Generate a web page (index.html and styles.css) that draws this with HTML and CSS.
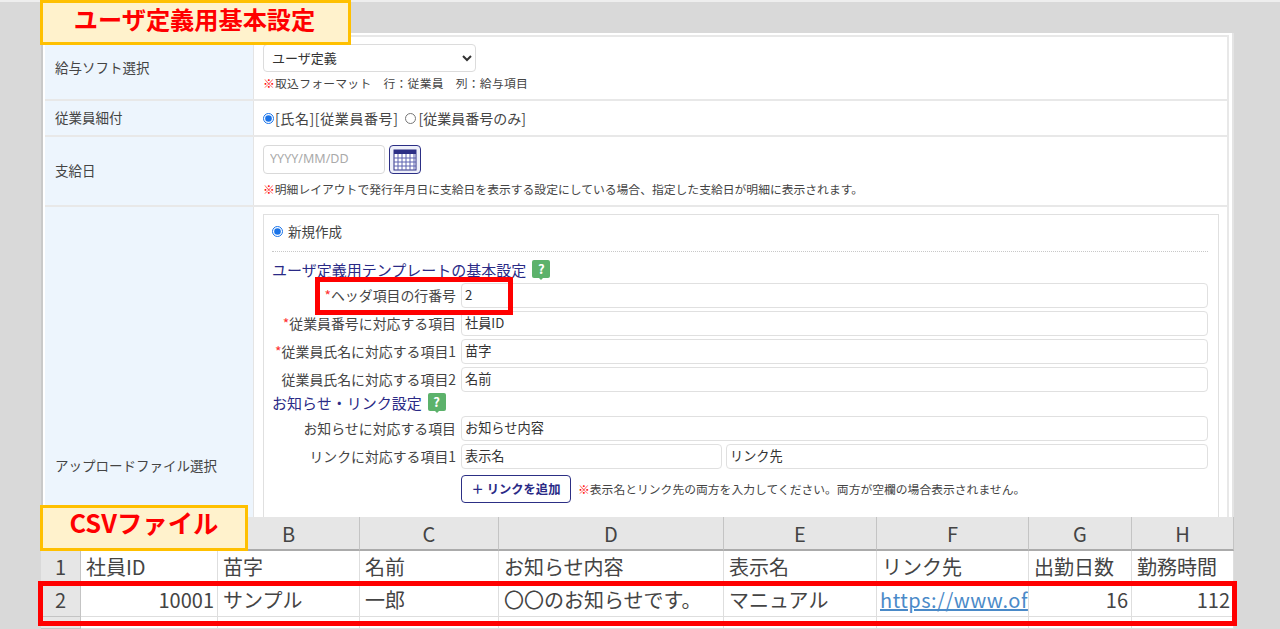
FILE: index.html
```html
<!DOCTYPE html>
<html lang="ja">
<head>
    <meta charset="UTF-8">
    <title>ユーザ定義用基本設定</title>
    <link rel="stylesheet" href="styles.css">
</head>
<body>

    <div class="callout callout-top">ユーザ定義用基本設定</div>
    <div class="callout callout-csv">CSVファイル</div>
    <div class="mark mark-header"></div>
    <div class="mark mark-row"></div>

    <div class="screen">

        <!-- ===== Form ===== -->
        <div class="panel">
            <div class="row row-soft">
                <div class="label">給与ソフト選択</div>
                <div class="cell">
                    <select class="select"><option>ユーザ定義</option></select>
                    <p class="note note-wide"><span class="kome">※</span>取込フォーマット　行：従業員　列：給与項目</p>
                </div>
            </div>

            <div class="row row-slip">
                <div class="label">従業員細付</div>
                <div class="cell cell-radio">
                    <input type="radio" name="slip" checked>
                    <span class="slip-name">[氏名][従業員番号]</span>
                    <input type="radio" name="slip">
                    <span>[従業員番号のみ]</span>
                </div>
            </div>

            <div class="row row-date">
                <div class="label">支給日</div>
                <div class="cell">
                    <div class="date-line">
                        <input type="text" class="date" placeholder="YYYY/MM/DD">
                        <div class="cal">
                            <svg width="24" height="22" viewBox="0 0 24 22">
                                <rect x="1" y="1" width="22" height="20" fill="#fff" stroke="#2c2f85"/>
                                <rect x="1" y="1" width="22" height="4" fill="#2c2f85"/>
                                <path d="M1 9h22M1 13h22M1 17h22M5 5v16M9 5v16M13 5v16M17 5v16M21 5v16" stroke="#5d62b0" fill="none"/>
                            </svg>
                        </div>
                    </div>
                    <p class="note"><span class="kome">※</span>明細レイアウトで発行年月日に支給日を表示する設定にしている場合、指定した支給日が明細に表示されます。</p>
                </div>
            </div>

            <div class="row row-upload">
                <div class="label label-upload">アップロードファイル選択</div>
                <div class="cell cell-upload">
                    <div class="box">
                        <div class="new-line">
                            <input type="radio" name="mode" checked>
                            <span>新規作成</span>
                        </div>

                        <div class="title title-first">ユーザ定義用テンプレートの基本設定 <span class="help">?</span></div>
                        <div class="field"><label><span class="req">*</span>ヘッダ項目の行番号</label><div class="input">2</div></div>
                        <div class="field"><label><span class="req">*</span>従業員番号に対応する項目</label><div class="input">社員ID</div></div>
                        <div class="field"><label><span class="req">*</span>従業員氏名に対応する項目1</label><div class="input">苗字</div></div>
                        <div class="field"><label>従業員氏名に対応する項目2</label><div class="input">名前</div></div>

                        <div class="title">お知らせ・リンク設定 <span class="help">?</span></div>
                        <div class="field"><label>お知らせに対応する項目</label><div class="input">お知らせ内容</div></div>
                        <div class="field">
                            <label>リンクに対応する項目1</label>
                            <div class="input input-name">表示名</div>
                            <div class="input">リンク先</div>
                        </div>
                        <div class="add-line">
                            <div class="add">＋ リンクを追加</div>
                            <p class="note"><span class="kome">※</span>表示名とリンク先の両方を入力してください。両方が空欄の場合表示されません。</p>
                        </div>
                    </div>
                </div>
            </div>
        </div>

        <!-- ===== CSV ===== -->
        <div class="sheet">
            <div class="head"></div>
            <div class="head"></div>
            <div class="head">B</div>
            <div class="head">C</div>
            <div class="head">D</div>
            <div class="head">E</div>
            <div class="head">F</div>
            <div class="head">G</div>
            <div class="head">H</div>

            <div class="num">1</div>
            <div class="td">社員ID</div>
            <div class="td">苗字</div>
            <div class="td">名前</div>
            <div class="td">お知らせ内容</div>
            <div class="td">表示名</div>
            <div class="td">リンク先</div>
            <div class="td">出勤日数</div>
            <div class="td">勤務時間</div>

            <div class="num">2</div>
            <div class="td right">10001</div>
            <div class="td">サンプル</div>
            <div class="td">一郎</div>
            <div class="td">〇〇のお知らせです。</div>
            <div class="td">マニュアル</div>
            <div class="td link"><span>https://www.of</span></div>
            <div class="td right">16</div>
            <div class="td right">112</div>

            <div class="num"></div>
            <div class="td"></div>
            <div class="td"></div>
            <div class="td"></div>
            <div class="td"></div>
            <div class="td"></div>
            <div class="td"></div>
            <div class="td"></div>
            <div class="td"></div>
        </div>

    </div>

</body>
</html>
```

FILE: styles.css
```css
* {box-sizing: border-box}

html, body {height: 629px}

body {
    margin: 0;
    overflow: hidden;
    background-color: #d9d9d9;
    border-top: 2px solid #eeeeee;
    font: 13.5px "Noto Sans CJK JP", "Noto Sans", sans-serif;
    color: #444;
}

p {margin: 0}

.screen {padding: 31px 46px 0 41px}

/* ----- Overlays ----- */

.callout {
    position: absolute;
    display: flex;
    justify-content: center;
    align-items: center;
    background-color: #fff2cc;
    border: 3px solid #ffc000;
    color: #ff0000;
    font-weight: 700;
    line-height: 1;
    z-index: 3;
}

.callout-top {
    left: 40px;
    top: 0;
    width: 311px;
    height: 45px;
    padding: 0 2px 7px 0;
    font-size: 24.2px;
}

.callout-csv {
    left: 40px;
    top: 505px;
    width: 208px;
    height: 46px;
    padding-bottom: 10px;
    font-size: 25.4px;
}

.mark {
    position: absolute;
    border: 5px solid #ff0000;
    z-index: 2;
}

.mark-header {
    left: 315px;
    top: 277px;
    width: 198px;
    height: 38px;
}

.mark-row {
    left: 38px;
    top: 581px;
    width: 1199px;
    height: 45px;
}

/* ----- Form ----- */

.panel {
    height: 484px;
    overflow: hidden;
    background-color: #fff;
    padding: 2px 3px 0 2px;
    border-left: 2px solid #c9c9c9;
    border-right: 2px solid #e4e4e4;
}

.row {
    display: flex;
    border-top: 2px solid #e8e8e8;
    border-right: 2px solid #e8e8e8;
}

.row-soft {height: 64px}
.row-slip {height: 36px}
.row-date {height: 70px}
.row-upload {height: 320px}

.label {
    flex: none;
    width: 209px;
    display: flex;
    align-items: center;
    padding: 0 0 2px 10px;
    background-color: #edf5fd;
    border-right: 1px solid #e4e4e4;
}

.label-upload {align-items: flex-start; padding-top: 248px}

.cell {
    flex: 1;
    padding: 7px 8px 0 9px;
}

.select {
    display: block;
    width: 213px;
    height: 28px;
    padding: 0 0 2px 4px;
    background-color: #fff;
    border: 1px solid #dcdcdc;
    border-radius: 4px;
    font: inherit;
    font-size: 13px;
    color: #333;
}

.note {
    margin-top: 3px;
    font-size: 11.8px;
    line-height: 16px;
    color: #444;
    white-space: nowrap;
}

.note-wide {letter-spacing: .25px}

.kome {color: #ff0000}

.cell-radio {
    display: flex;
    align-items: center;
    gap: 3px;
    padding-top: 0;
    font-size: 14px;
}

.cell-radio input:first-child {margin-right: -2px}

.slip-name {
    letter-spacing: .6px;
    margin-right: 3px;
}

.slip-name + input {margin-right: 3px}

input[type="radio"] {
    width: 11px;
    height: 11px;
    margin: 0;
    accent-color: #1a73e8;
}

.date-line {
    display: flex;
    gap: 4px;
}

.date {
    width: 122px;
    height: 29px;
    padding: 0 6px 2px;
    border: 1px solid #d9d9d9;
    border-radius: 4px;
    font: 12.5px "Noto Sans", sans-serif;
}

.date::placeholder {color: #aaa}

.cal {
    width: 32px;
    height: 29px;
    display: flex;
    justify-content: center;
    align-items: center;
    background-color: #eef0fa;
    border: 1px solid #2c2f85;
    border-radius: 4px;
}

.row-date .cell {padding-top: 8px}
.row-date .note {margin-top: 7px}

.box {
    height: 320px;
    padding: 0 10px 0 8px;
    border: 1px solid #e0e0e0;
}

.new-line {
    display: flex;
    align-items: center;
    gap: 5px;
    height: 37px;
    padding-bottom: 4px;
    border-bottom: 1px dotted #c8c8c8;
    font-size: 13.5px;
}

.title {
    display: flex;
    align-items: center;
    gap: 6px;
    height: 22px;
    margin: -4px 0 3px;
    color: #2a2a86;
    font-size: 15px;
}

.title-first {margin: 6px 0 3px}

.help {
    position: relative;
    width: 18px;
    height: 18px;
    border-radius: 2px;
    background-color: #5cb26b;
    color: #fff;
    font-weight: 700;
    font-size: 13px;
    line-height: 18px;
    text-align: center;
}

.help::after {
    content: "";
    position: absolute;
    left: 7px;
    top: 18px;
    border: 2px solid transparent;
    border-top-color: #5cb26b;
}

.field {
    display: flex;
    gap: 5px;
    margin-bottom: 3px;
    margin-left: -7px;
}

.field label {
    flex: none;
    width: 191px;
    text-align: right;
    line-height: 24px;
    white-space: nowrap;
    font-size: 13.9px;
}

.req {color: #ff3333}

.input {
    flex: 1;
    height: 25px;
    padding: 0 3px;
    border: 1px solid #e0e0e0;
    border-radius: 4px;
    line-height: 22px;
    font-size: 13.2px;
    color: #333;
}

.input-name {flex: none; width: 261px; margin-right: -1px}

.add-line {
    display: flex;
    align-items: center;
    gap: 7px;
    margin: 6px 0 0 189px;
}

.add {
    flex: none;
    width: 110px;
    height: 28px;
    border: 1px solid #2c2f85;
    border-radius: 4px;
    text-align: center;
    line-height: 26px;
    font-size: 12.3px;
    font-weight: 700;
    color: #2a2a86;
}

.add-line .note {margin-top: 0}

/* ----- Sheet ----- */

.sheet {
    display: grid;
    grid-template-columns: 40px 137px 142px 139px 225px 153px 152px 103px 102px;
    grid-template-rows: 34px 31px 35px 12px;
    background-color: #fff;
    font-size: 20px;
    color: #444;
}

.head, .num {
    background-color: #e6e6e6;
    display: flex;
    justify-content: center;
    align-items: center;
    border-right: 1px solid #c4c4c4;
    font-size: 20px;
}

.head {border-bottom: 2px solid #ababab}
.num {border-bottom: 1px solid #c4c4c4}

.td {
    display: flex;
    align-items: center;
    padding: 0 0 0 5px;
    white-space: nowrap;
    overflow: hidden;
    border-right: 1px solid #dedede;
    border-bottom: 1px solid #dedede;
}

.right {justify-content: flex-end; padding: 0 3px 0 0}

.link {
    padding-left: 3px;
    color: #4a8ac8;
    text-decoration: underline;
    letter-spacing: .5px;
}
```
